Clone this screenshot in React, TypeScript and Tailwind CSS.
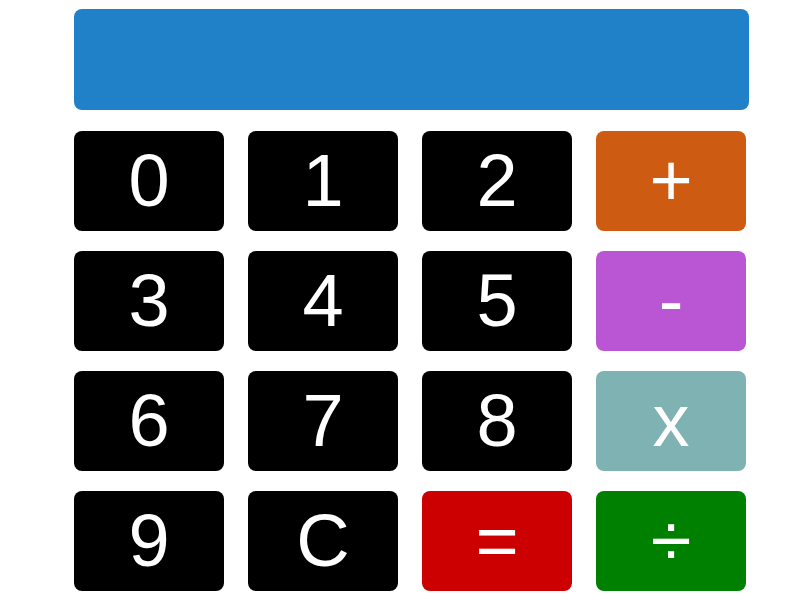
const keys = [
  { label: "0", bg: "bg-black" },
  { label: "1", bg: "bg-black" },
  { label: "2", bg: "bg-black" },
  { label: "+", bg: "bg-[#cd5c12]" },
  { label: "3", bg: "bg-black" },
  { label: "4", bg: "bg-black" },
  { label: "5", bg: "bg-black" },
  { label: "-", bg: "bg-[#ba55d3]" },
  { label: "6", bg: "bg-black" },
  { label: "7", bg: "bg-black" },
  { label: "8", bg: "bg-black" },
  { label: "x", bg: "bg-[#7fb2b2]" },
  { label: "9", bg: "bg-black" },
  { label: "C", bg: "bg-black" },
  { label: "=", bg: "bg-[#cc0000]" },
  { label: "÷", bg: "bg-[#008000]" },
];

const App = () => {
  return (
    <div className="w-[800px] h-[600px] bg-white pl-[74px] pt-[9px] font-['Liberation_Sans',Arial,sans-serif]">
      <div className="w-[675px] h-[101px] rounded-lg bg-[#2080c8]" />
      <div className="mt-[21px] grid grid-cols-[repeat(4,150px)] gap-x-[24px] gap-y-[20px]">
        {keys.map((k) => (
          <button
            key={k.label}
            className={`h-[100px] w-[150px] rounded-lg ${k.bg} text-white text-[74px] leading-none flex items-center justify-center`}
          >
            {k.label}
          </button>
        ))}
      </div>
    </div>
  );
};

export default App;
